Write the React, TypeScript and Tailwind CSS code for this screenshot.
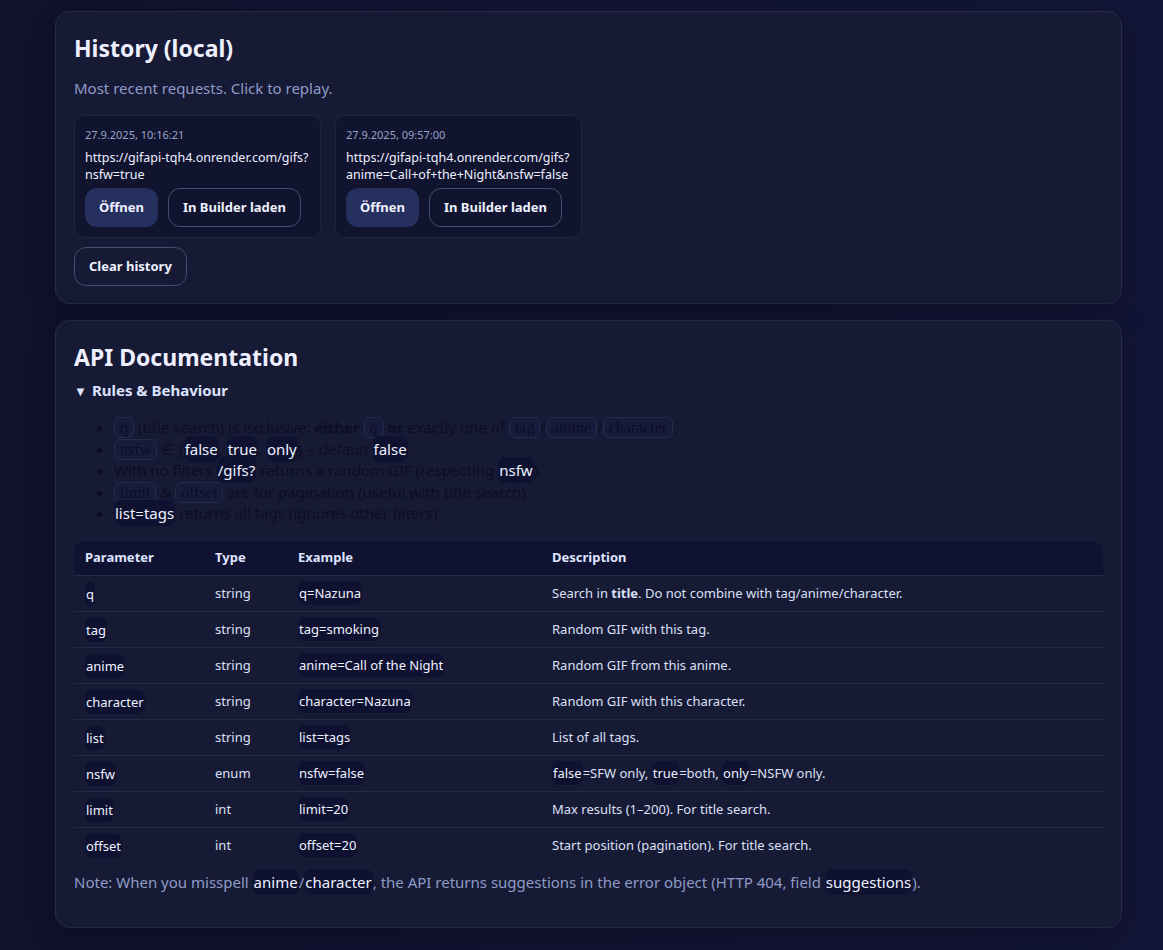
import type { ReactNode } from "react";

const history = [
  { time: "27.9.2025, 10:16:21", url: "https://gifapi-tqh4.onrender.com/gifs?nsfw=true" },
  { time: "27.9.2025, 09:57:00", url: "https://gifapi-tqh4.onrender.com/gifs?anime=Call+of+the+Night&nsfw=false" }
];

const params: { name: string; type: string; example: string; desc: ReactNode }[] = [
  {
    name: "q",
    type: "string",
    example: "q=Nazuna",
    desc: (
      <>
        Search in <b>title</b>. Do not combine with tag/anime/character.
      </>
    )
  },
  { name: "tag", type: "string", example: "tag=smoking", desc: "Random GIF with this tag." },
  { name: "anime", type: "string", example: "anime=Call of the Night", desc: "Random GIF from this anime." },
  { name: "character", type: "string", example: "character=Nazuna", desc: "Random GIF with this character." },
  { name: "list", type: "string", example: "list=tags", desc: "List of all tags." },
  {
    name: "nsfw",
    type: "enum",
    example: "nsfw=false",
    desc: (
      <>
        <Pill>false</Pill>=SFW only, <Pill>true</Pill>=both, <Pill>only</Pill>=NSFW only.
      </>
    )
  },
  { name: "limit", type: "int", example: "limit=20", desc: "Max results (1–200). For title search." },
  { name: "offset", type: "int", example: "offset=20", desc: "Start position (pagination). For title search." }
];

function Pill({ children }: { children: ReactNode }) {
  return <span className="rounded-[8px] bg-[#0e1130] px-[1px] py-[3px] text-[#eef1ff]">{children}</span>;
}

function Code({ children }: { children: ReactNode }) {
  return (
    <code className="rounded-[6px] border border-[#262b4c] bg-[#181c3c] px-[5px] py-[1px] font-['Liberation_Serif',serif] text-[16px] leading-none text-[#0b0d22]">
      {children}
    </code>
  );
}

function OutlineButton({ children }: { children: ReactNode }) {
  return (
    <button
      type="button"
      className="h-[39px] rounded-[12px] border border-[#474d6e] bg-transparent px-[14px] text-[13px] font-bold text-[#eef1ff]"
    >
      {children}
    </button>
  );
}

export default function App() {
  return (
    <div className="min-h-[950px] bg-[linear-gradient(90deg,#10122e,#131538)] pb-[23px] pl-[55px] pt-[11px] font-['Noto_Sans',sans-serif] text-[#e6e9fb]">
      <div className="flex w-[1067px] flex-col gap-[16px]">
        <section className="rounded-[14px] border border-[#262a47] bg-[#171a35] px-[18px] pb-[17px] pt-[20px] shadow-[0_10px_30px_rgba(0,0,0,0.25)]">
          <h2 className="text-[23px] leading-[32px] font-bold text-[#eef0ff]">History (local)</h2>
          <p className="mt-[13px] text-[15px] leading-[22px] text-[#8f9ac6]">Most recent requests. Click to replay.</p>
          <div className="mt-[16px] flex gap-[14px]">
            {history.map((h) => (
              <div key={h.time} className="w-[247px] rounded-[10px] border border-[#1f2343] bg-[#11142f] px-[10px] pb-[10px] pt-[11px]">
                <p className="text-[11px] leading-[16px] text-[#9aa3c8]">{h.time}</p>
                <p className="mt-[6px] break-all text-[12.5px] leading-[17px] text-[#eef0ff]">{h.url}</p>
                <div className="mt-[5px] flex gap-[10px]">
                  <button type="button" className="h-[39px] rounded-[12px] bg-[#26305e] px-[14px] text-[13px] font-bold text-[#eef1ff]">
                    Öffnen
                  </button>
                  <OutlineButton>In Builder laden</OutlineButton>
                </div>
              </div>
            ))}
          </div>
          <div className="mt-[9px]">
            <OutlineButton>Clear history</OutlineButton>
          </div>
        </section>

        <section className="rounded-[14px] border border-[#262a47] bg-[#171a35] px-[18px] pb-[34px] pt-[20px] shadow-[0_10px_30px_rgba(0,0,0,0.25)]">
          <h2 className="text-[23px] leading-[32px] font-bold text-[#eef0ff]">API Documentation</h2>
          <details open className="mt-[6px]">
            <summary className="cursor-pointer list-none text-[15px] leading-[22px] font-bold text-[#dde3ff]">
              <span className="mr-[5px] text-[13px]">▼</span>Rules &amp; Behaviour
            </summary>
            <ul className="mt-[15px] list-disc pl-[40px] text-[15px] leading-[21.5px] text-[#0b0d22]">
              <li>
                <Code>q</Code> (title search) is exclusive: <b>either</b> <Code>q</Code> <b>or</b> exactly one of{" "}
                <Code>tag</Code>/<Code>anime</Code>/<Code>character</Code>.
              </li>
              <li>
                <Code>nsfw</Code> ∈ {"{"}
                <Pill>false</Pill>, <Pill>true</Pill>, <Pill>only</Pill>
                {"}"} – default <Pill>false</Pill>.
              </li>
              <li>
                With no filters <Pill>/gifs?</Pill> returns a random GIF (respecting <Pill>nsfw</Pill>).
              </li>
              <li>
                <Code>limit</Code> &amp; <Code>offset</Code> are for pagination (useful with title search).
              </li>
              <li>
                <Pill>list=tags</Pill> returns all tags (ignores other filters).
              </li>
            </ul>
          </details>

          <table className="mt-[16px] w-full border-collapse text-left text-[13px] text-[#dbe0f7]">
            <thead>
              <tr className="bg-[#0f1331]">
                <th className="h-[35px] w-[130px] rounded-tl-[10px] px-[11px] py-0 leading-[17px] font-bold text-[#dfe4ff]">Parameter</th>
                <th className="w-[83px] px-[11px] py-0 font-bold text-[#dfe4ff]">Type</th>
                <th className="w-[254px] px-[11px] py-0 font-bold text-[#dfe4ff]">Example</th>
                <th className="rounded-tr-[10px] px-[11px] py-0 font-bold text-[#dfe4ff]">Description</th>
              </tr>
            </thead>
            <tbody>
              {params.map((p) => (
                <tr key={p.name} className="border-t border-[#262a47]">
                  <td className="h-[36px] px-[11px] leading-[18px]">
                    <Pill>{p.name}</Pill>
                  </td>
                  <td className="px-[11px]">{p.type}</td>
                  <td className="px-[11px]">
                    <Pill>{p.example}</Pill>
                  </td>
                  <td className="px-[11px]">{p.desc}</td>
                </tr>
              ))}
            </tbody>
          </table>

          <p className="mt-[7px] text-[15px] leading-[22px] text-[#8f9ac6]">
            Note: When you misspell <Pill>anime</Pill>/<Pill>character</Pill>, the API returns suggestions in the error object (HTTP 404, field{" "}
            <Pill>suggestions</Pill>).
          </p>
        </section>
      </div>
    </div>
  );
}
